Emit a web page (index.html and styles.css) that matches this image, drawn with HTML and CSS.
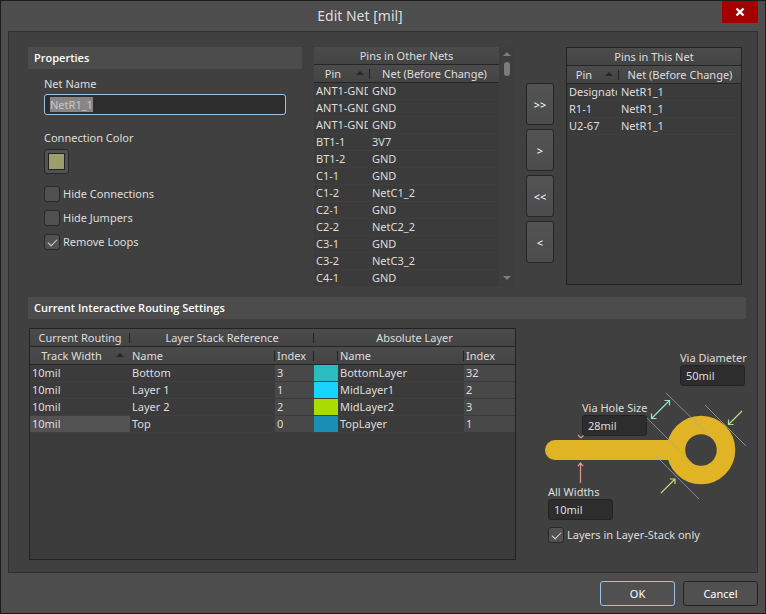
FILE: index.html
```html
<!DOCTYPE html>
<html lang="en">
<head>
<meta charset="utf-8">
<title>Edit Net [mil]</title>
<link rel="stylesheet" href="styles.css">
</head>
<body>
<form class="dialog">
  <header class="titlebar">
    <h1 class="title">Edit Net [mil]</h1>
    <button type="button" class="close" aria-label="Close">
      <svg width="10" height="10" viewBox="0 0 10 10"><path d="M1.5 1.5 8.5 8.5M8.5 1.5 1.5 8.5" stroke="#fff" stroke-width="2.4"/></svg>
    </button>
  </header>

  <main class="panel">
    <div class="top">
      <section class="properties">
        <h2 class="section-head">Properties</h2>
        <div class="prop-body">
          <label class="label" for="net-name">Net Name</label>
          <input class="text-input net-name" id="net-name" type="text" value="NetR1_1">
          <label class="label" for="color">Connection Color</label>
          <button type="button" class="color-button" id="color" aria-label="Connection Color"><span class="color-chip"></span></button>
          <label class="check"><input type="checkbox">Hide Connections</label>
          <label class="check"><input type="checkbox">Hide Jumpers</label>
          <label class="check"><input type="checkbox" checked>Remove Loops</label>
        </div>
      </section>

      <div class="other-nets">
        <table class="grid pins">
          <colgroup><col class="col-other-pin"><col></colgroup>
          <thead>
            <tr><th colspan="2">Pins in Other Nets</th></tr>
            <tr><th class="split sort pin-head">Pin</th><th>Net (Before Change)</th></tr>
          </thead>
          <tbody>
            <tr><td>ANT1-GND</td><td>GND</td></tr>
            <tr><td>ANT1-GND</td><td>GND</td></tr>
            <tr><td>ANT1-GND</td><td>GND</td></tr>
            <tr><td>BT1-1</td><td>3V7</td></tr>
            <tr><td>BT1-2</td><td>GND</td></tr>
            <tr><td>C1-1</td><td>GND</td></tr>
            <tr><td>C1-2</td><td>NetC1_2</td></tr>
            <tr><td>C2-1</td><td>GND</td></tr>
            <tr><td>C2-2</td><td>NetC2_2</td></tr>
            <tr><td>C3-1</td><td>GND</td></tr>
            <tr><td>C3-2</td><td>NetC3_2</td></tr>
            <tr><td>C4-1</td><td>GND</td></tr>
          </tbody>
        </table>
        <div class="scrollbar" aria-hidden="true">
          <span class="arrow-up"></span>
          <span class="thumb"></span>
          <span class="arrow-down"></span>
        </div>
      </div>

      <div class="movers">
        <button type="button" class="mover">&gt;&gt;</button>
        <button type="button" class="mover">&gt;</button>
        <button type="button" class="mover">&lt;&lt;</button>
        <button type="button" class="mover">&lt;</button>
      </div>

      <div class="this-net framed">
        <table class="grid pins">
          <colgroup><col class="col-this-pin"><col></colgroup>
          <thead>
            <tr><th colspan="2">Pins in This Net</th></tr>
            <tr><th class="split sort pin-head">Pin</th><th>Net (Before Change)</th></tr>
          </thead>
          <tbody>
            <tr><td>Designator</td><td>NetR1_1</td></tr>
            <tr><td>R1-1</td><td>NetR1_1</td></tr>
            <tr><td>U2-67</td><td>NetR1_1</td></tr>
          </tbody>
        </table>
      </div>
    </div>

    <h2 class="section-head">Current Interactive Routing Settings</h2>

    <div class="bottom">
      <div class="routing framed">
        <table class="grid layers">
          <colgroup><col class="col-width"><col><col class="col-index"><col class="col-swatch"><col class="col-abs"><col class="col-abs-index"></colgroup>
          <thead>
            <tr><th class="split">Current Routing</th><th class="split" colspan="2">Layer Stack Reference</th><th colspan="3">Absolute Layer</th></tr>
            <tr><th class="sort track-head">Track Width</th><th class="left split">Name</th><th class="left split">Index</th><th class="split"></th><th class="left split">Name</th><th class="left">Index</th></tr>
          </thead>
          <tbody>
            <tr><td>10mil</td><td>Bottom</td><td class="num">3</td><td class="swatch bottom-layer"></td><td>BottomLayer</td><td class="num">32</td></tr>
            <tr><td>10mil</td><td>Layer 1</td><td class="num">1</td><td class="swatch mid-one"></td><td>MidLayer1</td><td class="num">2</td></tr>
            <tr><td>10mil</td><td>Layer 2</td><td class="num">2</td><td class="swatch mid-two"></td><td>MidLayer2</td><td class="num">3</td></tr>
            <tr><td class="selected">10mil</td><td>Top</td><td class="num">0</td><td class="swatch top-layer"></td><td>TopLayer</td><td class="num">1</td></tr>
          </tbody>
        </table>
      </div>

      <section class="via">
        <div class="diagram">
          <svg class="drawing" viewBox="545 350 200 170" width="200" height="170" aria-hidden="true">
            <path d="M555 450H675" stroke="#e0b424" stroke-width="20" stroke-linecap="round"/>
            <circle cx="701" cy="450" r="25" fill="none" stroke="#e0b424" stroke-width="18.500"/>
            <g stroke="#a8a8a8" stroke-width=".7" fill="none">
              <path d="M666 393 711 437M647 418 692 463M705 405 746 446M655 455 699 499"/>
            </g>
            <g fill="none" stroke-width="1.200">
              <path d="M651.500 418.500 669.500 400.500M651.500 413.500V418.500H656.500M664.500 400.500H669.500V405.500" stroke="#8fe3c8"/>
              <path d="M742 411 728.500 424.500M728.500 419.500V424.500H733.500" stroke="#b5dc83"/>
              <path d="M661 493 675 479M670 479H675V484" stroke="#cfd27e"/>
              <path d="M580.500 483V463M578 466 580.500 463 583 466" stroke="#dc9696"/>
              <path d="M578 435 581 438 584 435" stroke="#dc9696"/>
            </g>
          </svg>
          <div class="field diameter"><label class="label" for="diameter">Via Diameter</label><input class="text-input" id="diameter" type="text" value="50mil"></div>
          <div class="field hole"><label class="label" for="hole">Via Hole Size</label><input class="text-input" id="hole" type="text" value="28mil"></div>
          <div class="field widths"><label class="label" for="widths">All Widths</label><input class="text-input" id="widths" type="text" value="10mil"></div>
        </div>
        <label class="check stack-only"><input type="checkbox" checked>Layers in Layer-Stack only</label>
      </section>
    </div>
  </main>

  <footer class="footer">
    <button type="button" class="action primary">OK</button>
    <button type="button" class="action">Cancel</button>
  </footer>
</form>
<script src="script.js"></script>
</body>
</html>
```
FILE: styles.css
```css
* { box-sizing: border-box; }

body {
  margin: 0;
  background: #4d4d4d;
  color: #dedede;
  font: 11px/15px "Noto Sans", "Open Sans", sans-serif;
}

button, input { font: inherit; color: inherit; }

.dialog {
  display: flex;
  flex-direction: column;
  min-height: 100vh;
  border: 1px solid #1c1c1c;
}

.titlebar {
  display: flex;
  align-items: flex-start;
  height: 30px;
  padding: 0 7px;
}

.title {
  flex: 1;
  margin: 0;
  padding-right: 10px;
  font-size: 14px;
  font-weight: 400;
  line-height: 30px;
  text-align: center;
}

.close {
  display: flex;
  align-items: center;
  justify-content: center;
  width: 36px;
  height: 22px;
  padding: 0;
  border: 0;
  background: #a30000;
}

.panel {
  flex: 1;
  display: flex;
  flex-direction: column;
  margin: 0 7px;
  padding: 15px 11px 12px 19px;
  border: 1px solid #303030;
  background: #404040;
}

.section-head {
  margin: 0;
  padding: 0 6px;
  background: #4c4c4c;
  color: #fff;
  font-family: "Open Sans", "Noto Sans", sans-serif;
  font-size: 11px;
  font-weight: 600;
  line-height: 22px;
}

.top {
  display: grid;
  grid-template-columns: 274fr 200fr 28px 176fr;
  gap: 12px;
  padding-right: 4px;
  margin-bottom: 10px;
}

.prop-body {
  display: flex;
  flex-direction: column;
  align-items: flex-start;
  padding: 7px 16px 0;
}

.text-input {
  width: 100%;
  height: 21px;
  padding: 0 5px;
  border: 1px solid #232323;
  border-radius: 3px;
  outline: 0;
  background: #2d2d2d;
}

.net-name {
  margin: 3px 0 15px;
  border-color: #9cc3e6;
}

.net-name::selection { background: #868686; color: #c8c8c8; }

.color-button {
  width: 25px;
  height: 25px;
  margin: 4px 0 12px;
  padding: 3px;
  border: 1px solid #262626;
  border-radius: 3px;
  background: #525252;
}

.color-chip {
  display: block;
  height: 17px;
  border: 1px solid #222;
  background: #9c9f6b;
}

.check {
  display: flex;
  align-items: flex-start;
  gap: 3px;
  height: 16px;
  margin-bottom: 8px;
}

.check input {
  appearance: none;
  width: 16px;
  height: 16px;
  margin: 0;
  border: 1px solid #282828;
  border-radius: 3px;
  background: #515151;
}

.check input:checked::after {
  content: "";
  display: block;
  width: 8px;
  height: 4px;
  margin: 4px 3px;
  border: solid #d6d6d6;
  border-width: 0 0 1px 1px;
  transform: rotate(-45deg);
}

.framed {
  border: 1px solid #222;
  background: #3b3b3b;
}

.grid {
  width: 100%;
  border-spacing: 0;
  table-layout: fixed;
}

.grid th {
  position: relative;
  height: 18px;
  padding: 0 3px;
  border-bottom: 1px solid #262626;
  background: linear-gradient(#4b4b4b, #444);
  font-weight: 400;
  line-height: 17px;
  white-space: nowrap;
}

.grid th.left { padding-left: 2px; text-align: left; }

.grid .split::after {
  content: "";
  position: absolute;
  top: 4px;
  right: 0;
  bottom: 3px;
  width: 1px;
  background: #222;
}

.grid .sort::before {
  content: "";
  position: absolute;
  top: 6px;
  right: 6px;
  border: solid transparent;
  border-width: 0 4px 4px;
  border-bottom-color: #262626;
}

.grid .pin-head { padding-right: 21px; }
.grid .track-head { padding-right: 20px; }

.grid td {
  height: 17px;
  padding: 0 2px;
  border-bottom: 1px solid #3f3f3f;
  line-height: 16px;
  overflow: hidden;
  white-space: nowrap;
}

.pins td { border-right: 2px solid #3b3b3b; }

.grid .num { background: #484848; border-color: #3b3b3b; }
.grid .selected { background: #525252; }

.col-other-pin { width: 56px; }
.col-this-pin { width: 52px; }
.col-width { width: 100px; }
.col-index { width: 39px; }
.col-swatch { width: 24px; }
.col-abs { width: 126px; }
.col-abs-index { width: 51px; }

.bottom-layer { background: #2bbdc0; }
.mid-one { background: #18d4ff; }
.mid-two { background: #a9dc00; }
.top-layer { background: #1b8eb6; }

.other-nets {
  display: grid;
  grid-template-columns: 1fr 15px;
  background: #3b3b3b;
}

.scrollbar {
  display: flex;
  flex-direction: column;
  align-items: center;
  padding: 5px 0 7px;
  background: #3e3e3e;
}

.arrow-up, .arrow-down {
  border: solid transparent;
  border-width: 0 4px 4px;
  border-bottom-color: #7c7c7c;
}

.arrow-down {
  margin-top: auto;
  border-width: 4px 4px 0;
  border-top-color: #7c7c7c;
}

.thumb {
  width: 6px;
  height: 14px;
  margin-top: 6px;
  border-radius: 3px;
  background: #7c7c7c;
}

.movers {
  display: flex;
  flex-direction: column;
  gap: 4px;
  padding-top: 36px;
}

.mover {
  height: 42px;
  padding: 0;
  border: 1px solid #262626;
  border-radius: 3px;
  background: linear-gradient(#535353, #4c4c4c);
  color: #fff;
}

.this-net { margin-bottom: 2px; }

.bottom {
  flex: 1;
  display: grid;
  grid-template-columns: 1fr 201px;
  gap: 29px;
  padding: 9px 0 0 1px;
}

.via { padding-top: 22px; }

.diagram {
  display: grid;
  grid-template-columns: 3px 34px 31px 34px 33px 65px;
  grid-template-rows: 36px 14px 36px 48px 36px;
}

.drawing { grid-area: 1 / 1 / -1 / -1; overflow: visible; }
.field { display: flex; flex-direction: column; white-space: nowrap; }
.diameter { grid-area: 1 / 6; }
.hole { grid-area: 3 / 3 / auto / span 2; }
.widths { grid-area: 5 / 2 / auto / span 2; }

.stack-only { margin: 7px 0 0 3px; }

.footer {
  display: flex;
  justify-content: flex-end;
  gap: 8px;
  padding: 8px 7px 7px;
}

.action {
  width: 75px;
  height: 25px;
  padding: 0;
  border: 1px solid #222;
  border-radius: 3px;
  background: #505050;
  color: #fff;
}

.primary { border-color: #9cc3e6; }
```
FILE: script.js
```js
const netName = document.getElementById("net-name");
netName.focus();
netName.select();
```
